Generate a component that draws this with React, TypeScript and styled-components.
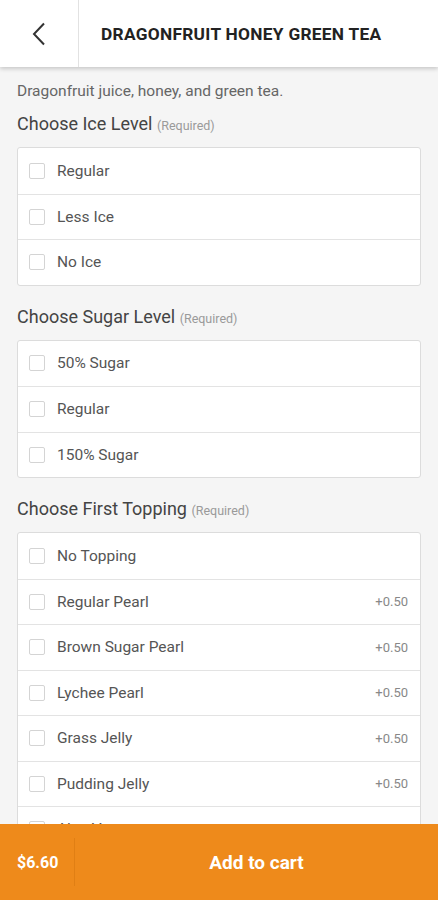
import React from 'react';
import styled, { createGlobalStyle } from 'styled-components';

const GlobalStyle = createGlobalStyle`
  html, body { margin: 0; padding: 0; height: 100%; }
  body { font-family: Roboto, "Liberation Sans", Arial, sans-serif; background: #f5f5f5; }
  #root { height: 100%; }
`;

const Page = styled.div`
  display: flex;
  flex-direction: column;
  height: 100vh;
  overflow: hidden;
`;

const Header = styled.header`
  display: flex;
  align-items: stretch;
  height: 67px;
  flex-shrink: 0;
  background: #fff;
  box-shadow: 0 2px 4px rgba(0, 0, 0, 0.18);
  position: relative;
  z-index: 2;
`;

const BackButton = styled.div`
  width: 78px;
  display: flex;
  align-items: center;
  justify-content: center;
  border-right: 1px solid #e2e2e2;
`;

const Title = styled.h1`
  margin: 0 0 0 22px;
  align-self: center;
  font-size: 17.3px;
  font-weight: 700;
  color: #222;
  letter-spacing: 0.3px;
`;

const Content = styled.main`
  flex: 1;
  overflow: hidden;
  padding: 14px 17px 0 17px;
`;

const Description = styled.p`
  margin: 0;
  font-size: 15.5px;
  color: #666;
  line-height: 20px;
`;

const Section = styled.section`
  margin-bottom: 20px;
`;

const SectionTitle = styled.h2`
  margin: 12px 0 10px;
  font-size: 18px;
  font-weight: 400;
  color: #444;
  line-height: 22px;
`;

const Required = styled.span`
  font-size: 12.5px;
  color: #9a9a9a;
`;

const Card = styled.div`
  background: #fff;
  border: 1px solid #dcdcdc;
  border-radius: 3px;
`;

const Row = styled.label`
  display: flex;
  align-items: center;
  height: 45.5px;
  padding: 0 12px 0 11px;
  box-sizing: border-box;
  & + & { border-top: 1px solid #e3e3e3; }
`;

const Box = styled.span`
  width: 14px;
  height: 14px;
  border: 1px solid #d4d4d4;
  border-radius: 2px;
  margin-right: 12px;
  flex-shrink: 0;
`;

const Label = styled.span`
  flex: 1;
  font-size: 15.5px;
  color: #555;
`;

const Price = styled.span`
  font-size: 13px;
  color: #888;
`;

const Footer = styled.footer`
  display: flex;
  align-items: stretch;
  height: 76px;
  flex-shrink: 0;
  background: #ee8a1b;
  color: #fff;
`;

const Total = styled.div`
  width: 75px;
  display: flex;
  align-items: center;
  padding-left: 17px;
  box-sizing: border-box;
  font-size: 16px;
  font-weight: 700;
  border-right: 1px solid #e07f14;
  margin: 14px 0;
`;

const AddButton = styled.div`
  flex: 1;
  display: flex;
  align-items: center;
  justify-content: center;
  font-size: 19px;
  font-weight: 700;
`;

type Option = { name: string; price?: string };

const sections: { title: string; options: Option[] }[] = [
  {
    title: 'Choose Ice Level',
    options: [{ name: 'Regular' }, { name: 'Less Ice' }, { name: 'No Ice' }],
  },
  {
    title: 'Choose Sugar Level',
    options: [{ name: '50% Sugar' }, { name: 'Regular' }, { name: '150% Sugar' }],
  },
  {
    title: 'Choose First Topping',
    options: [
      { name: 'No Topping' },
      { name: 'Regular Pearl', price: '+0.50' },
      { name: 'Brown Sugar Pearl', price: '+0.50' },
      { name: 'Lychee Pearl', price: '+0.50' },
      { name: 'Grass Jelly', price: '+0.50' },
      { name: 'Pudding Jelly', price: '+0.50' },
      { name: 'Aloe Vera', price: '+0.50' },
    ],
  },
];

export default function App() {
  return (
    <Page>
      <GlobalStyle />
      <Header>
        <BackButton>
          <svg width="14" height="24" viewBox="0 0 14 24" fill="none">
            <path d="M12 1.5 L2 12 L12 22.5" stroke="#333" strokeWidth="2" />
          </svg>
        </BackButton>
        <Title>DRAGONFRUIT HONEY GREEN TEA</Title>
      </Header>
      <Content>
        <Description>Dragonfruit juice, honey, and green tea.</Description>
        {sections.map(s => (
          <Section key={s.title}>
            <SectionTitle>
              {s.title} <Required>(Required)</Required>
            </SectionTitle>
            <Card>
              {s.options.map(o => (
                <Row key={o.name}>
                  <Box />
                  <Label>{o.name}</Label>
                  {o.price && <Price>{o.price}</Price>}
                </Row>
              ))}
            </Card>
          </Section>
        ))}
      </Content>
      <Footer>
        <Total>$6.60</Total>
        <AddButton>Add to cart</AddButton>
      </Footer>
    </Page>
  );
}
